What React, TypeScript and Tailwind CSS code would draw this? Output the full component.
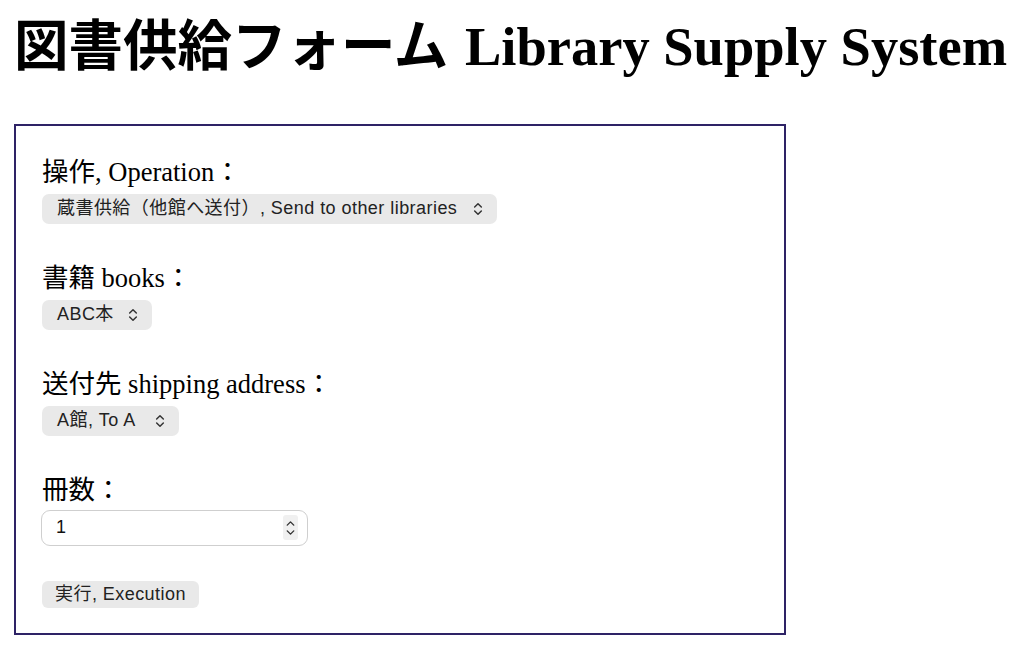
import { ChevronsUpDown, ChevronUp, ChevronDown } from "lucide-react";

const serif = "font-['Liberation_Serif','Noto_Sans_CJK_JP',serif]";
const sans = "font-['Liberation_Sans','Noto_Sans_CJK_JP',sans-serif] tracking-[0.025em]";

function Label({ children }: { children: React.ReactNode }) {
  return <div className={`${serif} h-[32px] text-[26.5px] leading-[32px] text-black`}>{children}</div>;
}

function Select({ value, w }: { value: string; w: string }) {
  return (
    <div className={`${sans} mt-[6px] flex h-[30px] ${w} items-center justify-between rounded-[7px] bg-[#e9e9e9] pl-[15px] pr-[11px] text-[18px] text-[#222]`}>
      <span className="whitespace-nowrap">{value}</span>
      <ChevronsUpDown size={16} strokeWidth={2.2} className="text-[#333]" />
    </div>
  );
}

export default function App() {
  return (
    <div className="min-h-[648px] bg-white px-[14px] pt-[20px]">
      <h1 className={`${serif} whitespace-nowrap text-[54.5px] font-bold leading-none text-black`}>
        図書供給フォーム <span className="ml-[3px]">Library Supply System</span>
      </h1>

      <form className="mt-[49px] h-[511px] w-[772px] border-2 border-[#2e2366] pl-[26px] pt-[30px]">
        <Label>操作, Operation：</Label>
        <Select value="蔵書供給（他館へ送付）, Send to other libraries" w="w-[455px]" />

        <div className="mt-[38px]">
          <Label>書籍 books：</Label>
          <Select value="ABC本" w="w-[110px]" />
        </div>

        <div className="mt-[38px]">
          <Label>送付先 shipping address：</Label>
          <Select value="A館, To A" w="w-[137px]" />
        </div>

        <div className="mt-[38px]">
          <Label>冊数：</Label>
          <div className={`${sans} -ml-px mt-[4px] flex h-[36px] w-[267px] items-center justify-between rounded-[9px] border border-[#cfcfcf] bg-white pl-[14px] pr-[9px] text-[18px] text-[#111]`}>
            <span>1</span>
            <div className="flex h-[25px] w-[15px] flex-col items-center justify-center rounded-[3px] bg-[#f0f0f0] text-[#333]">
              <ChevronUp size={13} strokeWidth={2.6} className="-mb-[2px]" />
              <ChevronDown size={13} strokeWidth={2.6} className="-mt-[2px]" />
            </div>
          </div>
        </div>

        <button type="button" className={`${sans} mt-[35px] flex h-[27px] items-center rounded-[6px] bg-[#e9e9e9] px-[13px] text-[18px] text-[#222]`}>
          実行, Execution
        </button>
      </form>
    </div>
  );
}
